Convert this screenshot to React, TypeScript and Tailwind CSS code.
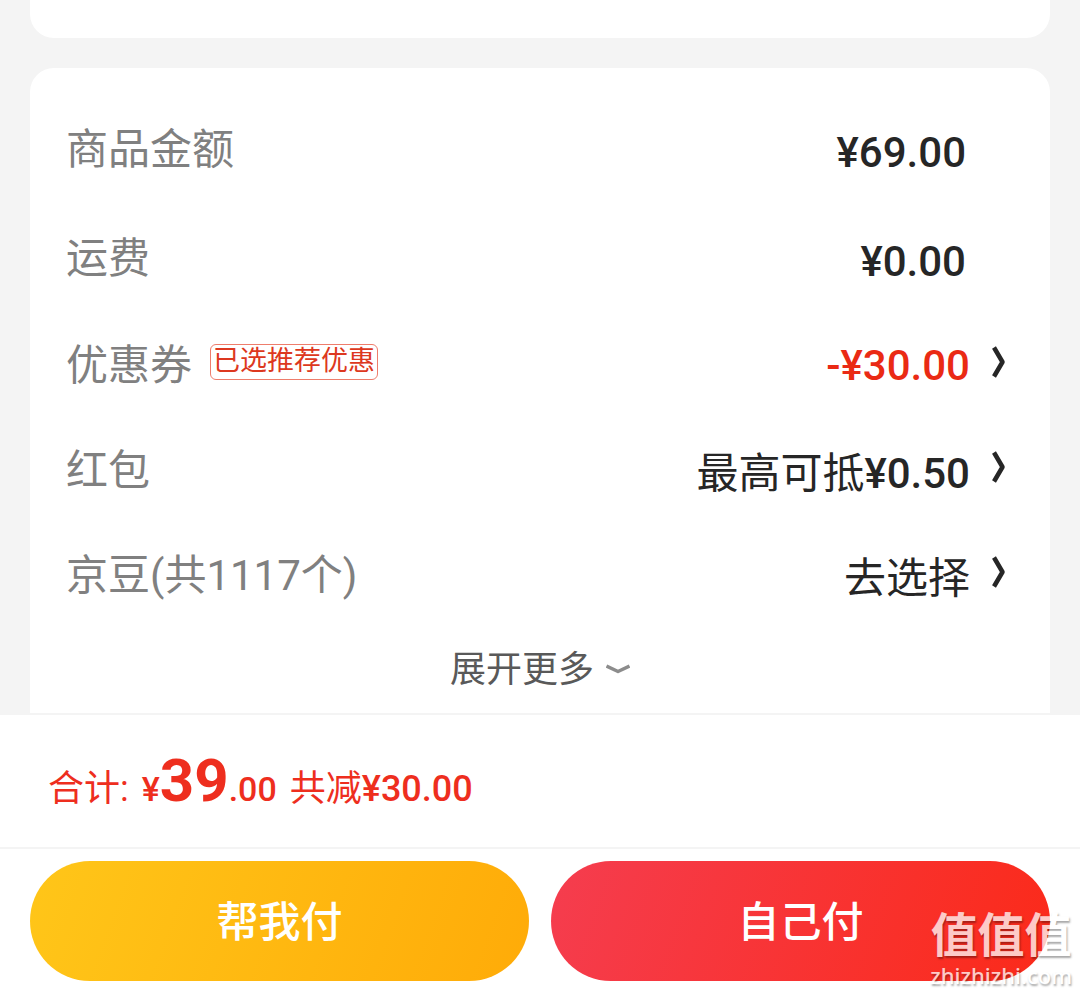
import { ReactNode } from "react";
import clsx from "clsx";

const ChevronRight = () => (
  <svg
    className="mb-2 h-8 w-4 shrink-0"
    viewBox="0 0 16 32"
    fill="none"
    stroke="currentColor"
    strokeWidth="4.5"
    aria-hidden="true"
  >
    <path d="M4 1.5 12.5 16 4 30.5" strokeLinejoin="round" />
  </svg>
);

const ChevronDown = () => (
  <svg
    className="h-3 w-6 shrink-0 text-[#8c8c8c]"
    viewBox="0 0 24 12"
    fill="none"
    stroke="currentColor"
    strokeWidth="3.5"
    aria-hidden="true"
  >
    <path d="M0.5 2 12 7.5 23.5 2" strokeLinejoin="round" />
  </svg>
);

const Price = ({ children, className }: { children: ReactNode; className?: string }) => (
  <span className={clsx("font-medium", className)}>{children}</span>
);

const Row = ({ label, children }: { label: string; children: ReactNode }) => (
  <div className="flex h-[109px] items-center justify-between pr-[84px] pl-9">
    <span className="text-[#808080]">{label}</span>
    {children}
  </div>
);

const LinkRow = ({
  label,
  tag,
  children,
}: {
  label: string;
  tag?: string;
  children: ReactNode;
}) => (
  <button type="button" className="flex h-[105px] w-full items-center justify-between pr-11 pl-9">
    <span className="flex items-center gap-[18px]">
      <span className="text-[#808080]">{label}</span>
      {tag && (
        <span className="mb-2 flex h-9 items-center rounded-md border border-[#ee7d6c] px-[2px] text-[27px] text-[#dd3820]">
          {tag}
        </span>
      )}
    </span>
    <span className="flex items-center gap-5">
      {children}
      <ChevronRight />
    </span>
  </button>
);

const Watermark = () => (
  <div className="pointer-events-none absolute right-2 bottom-1 flex flex-col items-center text-white opacity-75 [text-shadow:1px_2px_2px_rgb(0_0_0/0.45)]">
    <span className="text-[47px] leading-[50px] font-bold">值值值</span>
    <span className="font-['Noto_Sans',sans-serif] text-[22px] leading-7 font-medium">
      zhizhizhi.com
    </span>
  </div>
);

const App = () => {
  return (
    <div className="relative flex min-h-screen flex-col bg-[#f4f4f4] font-['Roboto','Noto_Sans_CJK_SC',sans-serif] text-[42px] leading-none text-[#262626]">
      <main className="flex flex-1 flex-col gap-[30px] px-[30px]">
        <section className="h-[38px] rounded-b-3xl bg-white" />

        <section className="flex-1 rounded-t-3xl bg-white pt-[27px]">
          <Row label="商品金额">
            <Price className="pt-1.5">¥69.00</Price>
          </Row>
          <Row label="运费">
            <Price className="pt-1.5">¥0.00</Price>
          </Row>
          <LinkRow label="优惠券" tag="已选推荐优惠">
            <Price className="text-[#ea2a14]">-¥30.00</Price>
          </LinkRow>
          <LinkRow label="红包">
            <span className="pt-1.5">
              最高可抵<Price>¥0.50</Price>
            </span>
          </LinkRow>
          <LinkRow label="京豆(共1117个)">
            <span className="pt-1.5">去选择</span>
          </LinkRow>
          <button
            type="button"
            className="flex h-20 w-full items-center justify-center gap-3 pt-1 text-4xl leading-none text-[#595959]"
          >
            展开更多
            <ChevronDown />
          </button>
        </section>
      </main>

      <footer className="border-t-2 border-[#f4f4f4] bg-white">
        <div className="box-content flex h-[132px] items-center border-b-2 border-[#f4f4f4] px-12 text-4xl leading-none text-[#ee2e1e]">
          <p className="flex items-baseline gap-[13px]">
            <span>合计:</span>
            <Price className="text-[34px]">
              ¥<span className="text-[60px] font-bold">39</span>.00
            </Price>
            <span>
              共减<Price>¥30.00</Price>
            </span>
          </p>
        </div>
        <div className="flex gap-[22px] px-[30px] py-3 text-white">
          <button
            type="button"
            className="h-[120px] flex-1 rounded-full bg-linear-[110deg] from-[#ffc619] to-[#ffab08] pt-1 font-medium"
          >
            帮我付
          </button>
          <button
            type="button"
            className="h-[120px] flex-1 rounded-full bg-linear-[110deg] from-[#f53d4f] to-[#fb2a19] pt-1 font-medium"
          >
            自己付
          </button>
        </div>
      </footer>

      <Watermark />
    </div>
  );
};

export default App;
